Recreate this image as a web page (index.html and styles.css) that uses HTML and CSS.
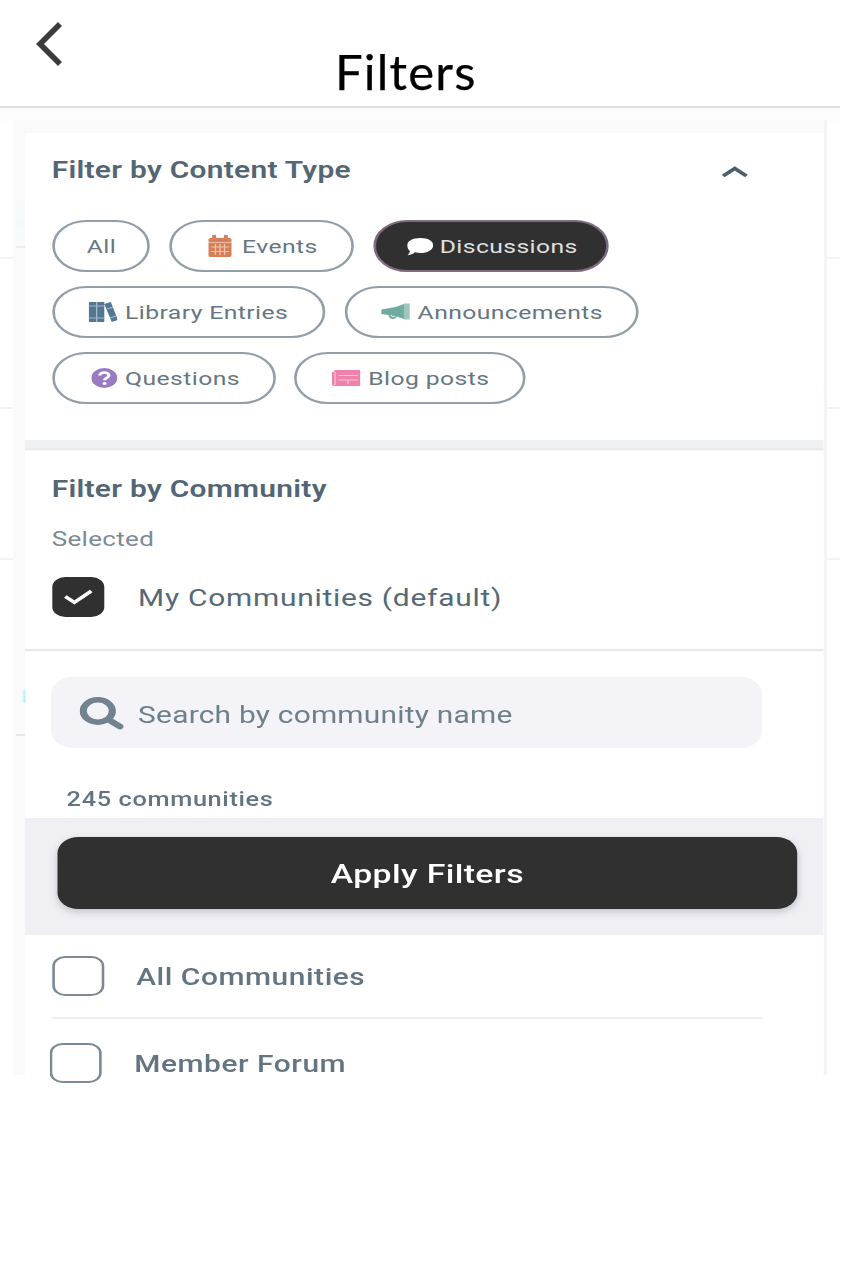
FILE: index.html
```html
<!DOCTYPE html>
<html lang="en">
<head>
<meta charset="utf-8">
<title>Filters</title>
<link rel="stylesheet" href="styles.css">
</head>
<body>
<div class="page">
  <header class="header">
    <svg class="back" viewBox="0 0 27 44"><path d="M24 2 4 22l20 20" fill="none" stroke="#3c3c3c" stroke-width="5.6"/></svg>
    <h1 class="title">Filters</h1>
  </header>
  <div class="stage">
    <div class="frame">
      <main class="panel">
        <section class="types">
          <div class="section-head">
            <h2 class="heading">Filter by Content Type</h2>
            <svg class="chevron" viewBox="0 0 20 13"><path d="M1 11 10 3.500l9 7.500" fill="none" stroke="#4b5f70" stroke-width="3.400"/></svg>
          </div>
          <div class="pills">
            <div class="row">
              <span class="pill all">All</span>
              <span class="pill events"><svg width="18" height="22" viewBox="0 0 18 22"><path fill="#d67f58" d="M3 3V0h3v3h6V0h3v3h1.500Q18 3 18 5v2H0V5q0-2 1.500-2zM0 7.500h18V20q0 2-1.500 2h-15Q0 22 0 20z"/><path stroke="#f0c3ae" stroke-width="1" d="M2 12h14M2 16.500h14M5.500 9v11M9 9v11M12.500 9v11"/></svg>Events</span>
              <span class="pill discussions"><svg width="20" height="20" viewBox="0 0 20 20"><path fill="#fff" d="M10.200 2C15.800 2 20 4.800 20 9.300s-4.200 7.800-9.800 7.800c-1.500 0-3-.3-4.200-.8C4.500 17.900 2.500 19.300.3 19.300c1-1.300 1.600-2.600 1.700-4.300C.8 13.500 0 11.700 0 9.300 0 4.800 4.500 2 10.200 2z"/></svg>Discussions</span>
            </div>
            <div class="row">
              <span class="pill library"><svg width="22" height="22" viewBox="0 0 22 22"><path fill="#517795" d="M0 1h6v20H0zM6.500 1H12v20H6.500zM12 3 17 1l5.500 18-4.800 2z"/><path stroke="#a3bac9" stroke-width="1" d="M0 5h12M0 17h12M14 8l4.500-1.800M16.500 17l4.500-2"/></svg>Library Entries</span>
              <span class="pill announcements"><svg width="22" height="20" viewBox="0 0 22 20"><path fill="#70aaa0" d="M0 7.500 11 5l6.500-3v15l-5.500-2.500q-1 3-3.500 2.500Q6 16.500 5.500 13L0 12z"/><path fill="#9bc5bd" d="M17.500 1.500H22v16h-4.500z"/><path fill="none" stroke="#d8ebe7" d="M7.500 13q1.500 3 3.200.8"/></svg>Announcements</span>
            </div>
            <div class="row">
              <span class="pill questions"><svg width="20" height="20" viewBox="0 0 20 20"><circle cx="10" cy="10" r="10" fill="#9a7bc2"/><path d="M6.500 7.500c0-4 7-4 7 0 0 2.500-3.300 2.500-3.300 4.800" fill="none" stroke="#fff" stroke-width="2.500"/><circle cx="10.200" cy="15.500" r="1.500" fill="#fff"/></svg>Questions</span>
              <span class="pill blog"><svg width="22" height="16" viewBox="0 0 22 16"><path fill="#ee82aa" d="M2 0h20v16H2Q0 16 0 14V2h2z"/><path fill="none" stroke="#f9c2d6" stroke-width="1" d="M2.500 2v13M5 5.500h15M5 10h15M12.500 10v4"/></svg>Blog posts</span>
            </div>
          </div>
        </section>
        <div class="divider"></div>
        <section class="community">
          <h2 class="heading narrow">Filter by Community</h2>
          <p class="selected">Selected</p>
          <div class="option default">
            <span class="box checked"><svg width="22" height="18" viewBox="0 0 22 18"><path d="M1 8.500 8 14.500 21 3" fill="none" stroke="#fff" stroke-width="3.200"/></svg></span>
            <span class="label my">My Communities (default)</span>
          </div>
        </section>
        <section class="finder">
          <div class="search">
            <svg width="34" height="34" viewBox="0 0 34 34"><circle cx="14" cy="15" r="11.200" fill="none" stroke="#718290" stroke-width="5.500"/><path d="m22 23.500 9 7" stroke="#718290" stroke-width="5.500" stroke-linecap="round"/></svg>
            <span class="query">Search by community name</span>
          </div>
          <p class="count">245 communities</p>
        </section>
        <div class="apply"><span class="button">Apply Filters</span></div>
        <div class="option all-row"><span class="box"></span><span class="label allc">All Communities</span></div>
        <div class="option member-row"><span class="box"></span><span class="label member">Member Forum</span></div>
      </main>
    </div>
  </div>
</div>
</body>
</html>
```
FILE: styles.css
```css
* { box-sizing: border-box; }
body { margin: 0; background: #fff; font-family: Roboto, "Liberation Sans", sans-serif; color: #566977; }
h1, h2, p { margin: 0; }
svg { flex: none; }
.page { width: 840px; height: 1280px; }
.header { display: flex; height: 108px; border-bottom: 2px solid #e0e0e0; }
.back { width: 27px; height: 44px; margin: 22px 0 0 36px; }
.title { margin: 41px 0 0 272px; font: 400 49px/60px Lato, sans-serif; letter-spacing: 1.2px; color: #000; -webkit-text-stroke: .25px #000; white-space: nowrap; }
.stage {
  height: 967px;
  padding: 12px 13px 0;
  background:
    linear-gradient(#f3f3f3, #f3f3f3) 0 149px / 100% 2px no-repeat,
    linear-gradient(#f3f3f3, #f3f3f3) 0 299px / 100% 2px no-repeat,
    linear-gradient(#f3f3f3, #f3f3f3) 0 450px / 100% 2px no-repeat,
    linear-gradient(#fafafa, #fefefe) 0 0 / 100% 16px no-repeat;
}
.frame {
  height: 955px;
  padding: 13px 0 0 12px;
  border-right: 3px solid #f4f4f4;
  background:
    linear-gradient(90deg, #fafafa, #a5eef8) 9px 570px / 3px 13px no-repeat,
    linear-gradient(#e6e6e6, #e6e6e6) 3px 614px / 9px 2px no-repeat,
    linear-gradient(#fafafa, #f3fafa, #fafafa) 3px 80px / 9px 46px no-repeat,
    linear-gradient(#ececec, #ececec) 3px 126px / 9px 2px no-repeat,
    #fafafa;
}

/* The panel is laid out at its natural width and stretched horizontally. */
.panel { width: 614px; height: 942px; background: #fff; transform: scaleX(1.3); transform-origin: 0 0; }
.types { height: 307px; padding: 20px 0 0 20.500px; }
.divider { height: 11px; background: linear-gradient(#eff0f1 0 8px, #e8eaeb 8px 10px, #f8f8f8 10px); }
.section-head { display: flex; justify-content: space-between; width: 535.500px; height: 67px; }
.heading { padding-top: 2px; font-size: 23px; line-height: 32px; font-weight: 600; color: #536675; letter-spacing: .22px; white-space: nowrap; }
.narrow { padding-top: 1px; }
.chevron { width: 20px; height: 13px; margin-top: 12px; }
.pills { display: grid; gap: 14px; }
.row { display: flex; gap: 14.500px; }
.pill { display: flex; align-items: center; height: 52px; border: 2px solid #919ea8; border-radius: 26px; font-size: 19px; font-weight: 450; letter-spacing: .32px; color: #657682; white-space: nowrap; }
.all { width: 75.500px; padding-left: 25px; }
.events { width: 142.500px; padding-left: 28px; gap: 8.500px; }
.discussions { width: 181px; padding-left: 24px; gap: 5.500px; background: #303030; border-color: #806b7f; color: #e0e0e0; }
.library { width: 210.500px; padding-left: 26px; gap: 6.500px; }
.announcements { width: 226px; padding-left: 26px; gap: 6.500px; }
.questions { width: 172px; padding-left: 28px; gap: 6.500px; }
.blog { width: 177.500px; padding-left: 27px; gap: 6px; }
.community { height: 200px; padding: 22px 0 0 20.500px; border-bottom: 2px solid #e5e8e9; }
.selected { margin-top: 20px; font-size: 20px; line-height: 26px; font-weight: 450; color: #7c8a95; letter-spacing: .25px; }
.option { display: flex; align-items: center; height: 40px; }
.default { margin-top: 25px; }
.box { display: flex; align-items: center; justify-content: center; width: 40px; height: 40px; border: 2.500px solid #7b8994; border-radius: 10px; }
.checked { background: #303030; border-color: #303030; }
.label { margin-left: 26.500px; padding-top: 3px; font-size: 23px; line-height: 30px; letter-spacing: .57px; white-space: nowrap; }
.finder { height: 167px; padding: 26px 0 0 20px; }
.search { display: flex; align-items: center; width: 547px; height: 71px; padding-left: 22px; gap: 11px; background: #f3f3f8; border-radius: 17px; }
.query { padding-top: 5px; font-size: 23px; color: #6f7f8b; letter-spacing: .17px; white-space: nowrap; }
.count { margin: 39px 0 0 12px; font-size: 19.500px; line-height: 26px; font-weight: 500; color: #647582; letter-spacing: .48px; }
.apply { height: 117px; padding: 19px 0 0 25px; background: #efeff4; }
.button { display: flex; align-items: center; justify-content: center; width: 569px; height: 72px; padding-top: 1px; border-radius: 16px; background: #303030; box-shadow: 0 3px 6px #9da3aa88; color: #fff; font-size: 26px; font-weight: 500; letter-spacing: .3px; }
.all-row { height: 84px; margin-left: 20.500px; width: 546px; border-bottom: 2px solid #f0f0f1; }
.member-row { height: 88px; margin-left: 19px; }
.allc, .member { margin-left: 25px; font-weight: 500; color: #647582; letter-spacing: .42px; }
```
